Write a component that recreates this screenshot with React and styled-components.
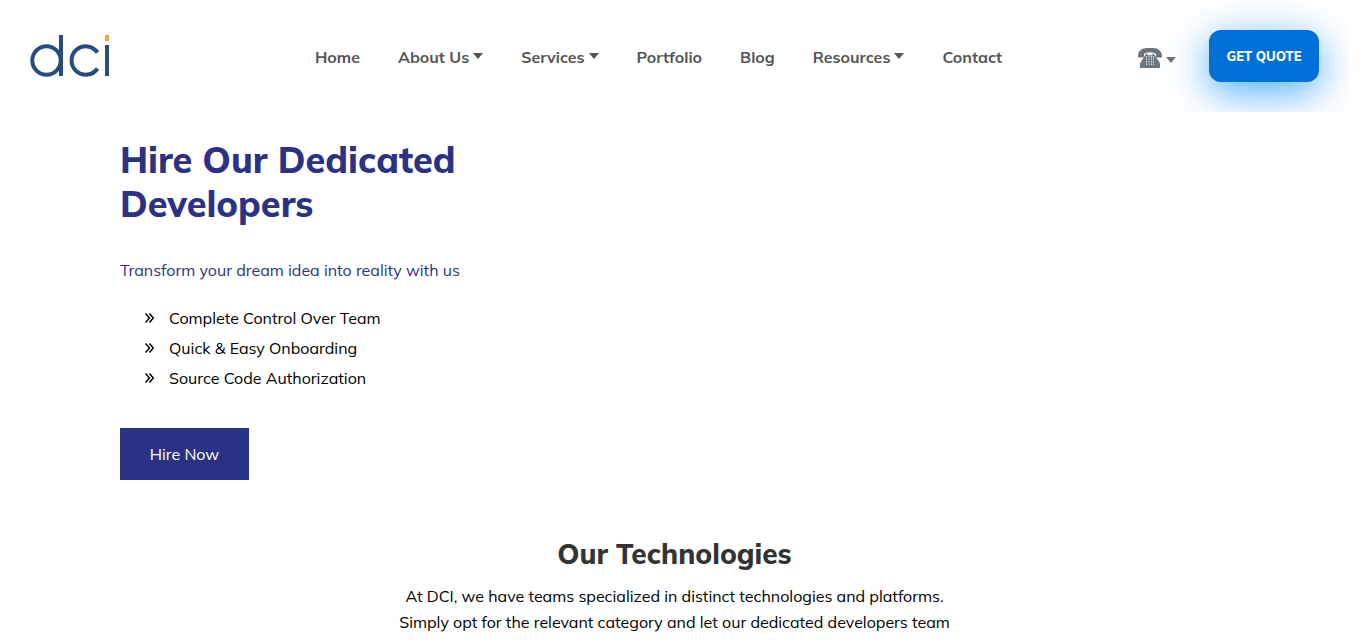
import React from "react";
import styled, { createGlobalStyle } from "styled-components";

const GlobalStyle = createGlobalStyle`
  *, *::before, *::after { box-sizing: border-box; }
  body {
    margin: 0;
    background: #fff;
    color: #000;
    font-family: Mulish, Muli, "Open Sans", sans-serif;
    font-size: 16px;
    line-height: 26px;
  }
  h1, h2, p, ul { margin: 0; padding: 0; }
  ul { list-style: none; }
  a { color: inherit; text-decoration: none; }
`;

const Page = styled.div`
  padding-right: 17px;
`;

const Header = styled.header`
  display: grid;
  grid-template-columns: 1fr auto 1fr;
  align-items: center;
  height: 112px;
  padding: 0 30px;
  overflow: hidden;
`;

const Logo = styled.a`
  display: block;
  width: 80px;
  height: 44px;
  svg { display: block; }
`;

const NavList = styled.ul`
  display: flex;
  gap: 38px;
  padding: 2px 32px 0 0;
`;

const NavLink = styled.a`
  display: flex;
  align-items: center;
  gap: 4px;
  color: #555;
  font-weight: 700;
  white-space: nowrap;
`;

const Caret = styled.span`
  border: 5px solid transparent;
  border-top: 6px solid currentColor;
  border-bottom: 0;
`;

const NavCaret = styled(Caret)`
  margin-bottom: 2px;
`;

const Actions = styled.div`
  display: flex;
  justify-content: flex-end;
  align-items: center;
  gap: 33px;
`;

const PhoneButton = styled.button`
  display: flex;
  align-items: center;
  gap: 4px;
  padding: 4px 0 0;
  border: 0;
  background: none;
  color: #6c757d;
  ${Caret} { margin-top: 4px; }
`;

const QuoteButton = styled.button`
  width: 110px;
  height: 52px;
  padding: 0;
  border: 0;
  border-radius: 12px;
  background: #0070d8;
  box-shadow: 0 10px 40px #0088ffb3;
  color: #fff;
  font: 800 13px/20px Mulish, Muli, "Open Sans", sans-serif;
`;

const Hero = styled.section`
  padding: 26px 120px 0;
`;

const Title = styled.h1`
  max-width: 440px;
  color: #2c3283;
  font-size: 36px;
  line-height: 44px;
  font-weight: 800;
`;

const Tagline = styled.p`
  margin-top: 31px;
  color: #2c3283;
`;

const Benefits = styled.ul`
  margin-top: 20px;
  padding-left: 25px;
`;

const Benefit = styled.li`
  display: flex;
  align-items: center;
  gap: 15px;
  line-height: 30px;
`;

const HireButton = styled.button`
  display: block;
  width: 129px;
  height: 52px;
  margin-top: 35px;
  padding: 0;
  border: 0;
  background: #2c3283;
  color: #fff;
  font: inherit;
`;

const Technologies = styled.section`
  padding: 56px 30px 0;
  text-align: center;
`;

const SectionTitle = styled.h2`
  color: #333;
  font-size: 28px;
  line-height: 36px;
  font-weight: 800;
`;

const Intro = styled.p`
  max-width: 570px;
  margin: 11px auto 0;
`;

const NAV = [
  ["Home", false],
  ["About Us", true],
  ["Services", true],
  ["Portfolio", false],
  ["Blog", false],
  ["Resources", true],
  ["Contact", false],
];

const BENEFITS = [
  "Complete Control Over Team",
  "Quick & Easy Onboarding",
  "Source Code Authorization",
];

function LogoMark() {
  return (
    <svg width="80" height="44" viewBox="0 0 80 44" fill="none" stroke="#284b7e" strokeWidth="4" aria-hidden="true">
      <circle cx="16.500" cy="26.500" r="14.200" />
      <path d="M31 1v41" />
      <path d="M67.500 18.500A14.200 14.200 0 1 0 67.500 34.500" />
      <path d="M77 11v31" />
      <path d="M77 1v6" stroke="#f9a13a" />
    </svg>
  );
}

function PhoneIcon() {
  return (
    <svg width="24" height="20" viewBox="0 0 24 20" aria-hidden="true">
      <g fill="currentColor">
        <path d="M0 8.500C0 3 3.500 0 9 0h6c5.500 0 9 3 9 8.500 0 .6-.4 1-1 1h-4c-.6 0-1-.4-1-1V7c0-1.800-2-2.800-6-2.800S6 5.200 6 7v1.500c0 .6-.4 1-1 1H1c-.6 0-1-.4-1-1z" />
        <path d="M7 7.500 8.500 5.500h1v1.700h5V5.500h1L17 7.500l4.500 7c.4.600.500 1 .500 1.500v3c0 .6-.4 1-1 1H3c-.6 0-1-.4-1-1v-3c0-.5.100-.9.500-1.500z" />
      </g>
      <g fill="#fff" fillOpacity=".85">
        {[8.5, 11, 13.5, 16].map((y) =>
          [8, 10.5, 13, 15].map((x) => <rect key={`${x}-${y}`} x={x} y={y - 0.5} width="1" height="1.500" />)
        )}
      </g>
    </svg>
  );
}

function DoubleChevron() {
  return (
    <svg width="9" height="12" viewBox="0 0 9 12" fill="none" stroke="currentColor" strokeWidth="1.500" aria-hidden="true">
      <path d="M.5 1.500 4.500 6l-4 4.500M4.500 1.500 8.300 6l-3.800 4.500" />
    </svg>
  );
}

export default function App() {
  return (
    <Page>
      <GlobalStyle />
      <Header>
        <Logo href="#" aria-label="DCI home"><LogoMark /></Logo>
        <nav>
          <NavList>
            {NAV.map(([label, menu]) => (
              <li key={label}>
                <NavLink href="#">{label}{menu && <NavCaret />}</NavLink>
              </li>
            ))}
          </NavList>
        </nav>
        <Actions>
          <PhoneButton type="button" aria-label="Phone numbers"><PhoneIcon /><Caret /></PhoneButton>
          <QuoteButton type="button">GET QUOTE</QuoteButton>
        </Actions>
      </Header>
      <main>
        <Hero>
          <Title>Hire Our Dedicated Developers</Title>
          <Tagline>Transform your dream idea into reality with us</Tagline>
          <Benefits>
            {BENEFITS.map((text) => (
              <Benefit key={text}><DoubleChevron />{text}</Benefit>
            ))}
          </Benefits>
          <HireButton type="button">Hire Now</HireButton>
        </Hero>
        <Technologies>
          <SectionTitle>Our Technologies</SectionTitle>
          <Intro>
            At DCI, we have teams specialized in distinct technologies and platforms.
            Simply opt for the relevant category and let our dedicated developers team
          </Intro>
        </Technologies>
      </main>
    </Page>
  );
}
